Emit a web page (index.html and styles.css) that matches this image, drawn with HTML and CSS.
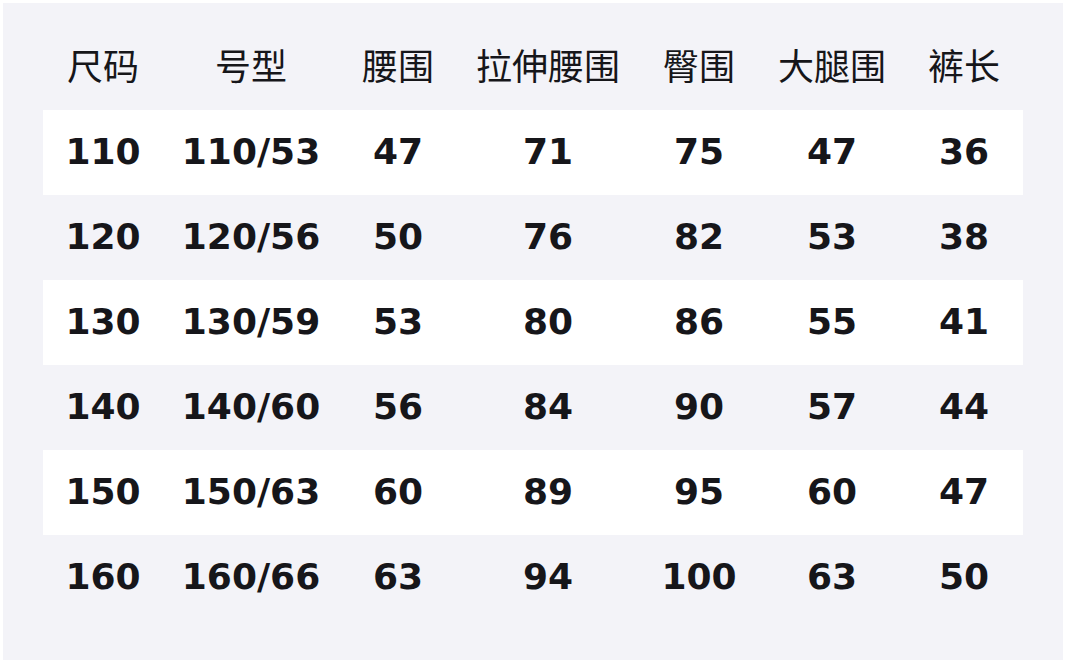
FILE: index.html
```html
<!DOCTYPE html>
<html lang="zh">
<head>
<meta charset="utf-8">
<link rel="stylesheet" href="styles.css">
</head>
<body>
<div class="panel">
  <table class="size-table">
    <colgroup>
      <col class="c1"><col class="c2"><col class="c3"><col class="c4"><col class="c5"><col class="c6"><col class="c7">
    </colgroup>
    <thead>
      <tr><th>尺码</th><th>号型</th><th>腰围</th><th>拉伸腰围</th><th>臀围</th><th>大腿围</th><th>裤长</th></tr>
    </thead>
    <tbody>
      <tr class="odd"><td>110</td><td>110/53</td><td>47</td><td>71</td><td>75</td><td>47</td><td>36</td></tr>
      <tr><td>120</td><td>120/56</td><td>50</td><td>76</td><td>82</td><td>53</td><td>38</td></tr>
      <tr class="odd"><td>130</td><td>130/59</td><td>53</td><td>80</td><td>86</td><td>55</td><td>41</td></tr>
      <tr><td>140</td><td>140/60</td><td>56</td><td>84</td><td>90</td><td>57</td><td>44</td></tr>
      <tr class="odd"><td>150</td><td>150/63</td><td>60</td><td>89</td><td>95</td><td>60</td><td>47</td></tr>
      <tr><td>160</td><td>160/66</td><td>63</td><td>94</td><td>100</td><td>63</td><td>50</td></tr>
    </tbody>
  </table>
</div>
</body>
</html>
```
FILE: styles.css
```css
html, body {
  margin: 0;
  padding: 0;
  background: #ffffff;
}
body {
  padding: 3px;
  width: 1066px;
  height: 663px;
  box-sizing: border-box;
}
.panel {
  background: #f3f3f8;
  width: 1060px;
  height: 657px;
  box-sizing: border-box;
  padding: 21px 40px 40px 40px;
}
.size-table {
  width: 980px;
  border-collapse: collapse;
  table-layout: fixed;
  color: #16161a;
}
.c1 { width: 120px; }
.c2 { width: 176px; }
.c3 { width: 118px; }
.c4 { width: 182px; }
.c5 { width: 120px; }
.c6 { width: 146px; }
.c7 { width: 118px; }
.size-table th {
  height: 86px;
  padding: 0 0 6px 0;
  box-sizing: border-box;
  font-family: "Noto Sans CJK SC", "Noto Sans", sans-serif;
  font-weight: 400;
  font-size: 36px;
  text-align: center;
  vertical-align: middle;
  line-height: 1;
}
.size-table td {
  height: 85px;
  padding: 0 0 2px 0;
  box-sizing: border-box;
  font-family: "DejaVu Sans", sans-serif;
  font-weight: 700;
  font-size: 36px;
  text-align: center;
  vertical-align: middle;
  line-height: 1;
}
.size-table tr.odd td {
  background: #ffffff;
}
```
